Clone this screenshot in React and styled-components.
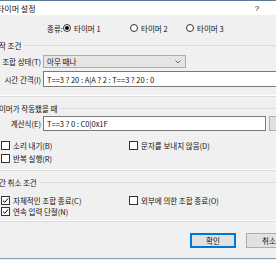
import React from 'react';
import styled, { createGlobalStyle } from 'styled-components';

const GlobalStyle = createGlobalStyle`
  html, body {
    margin: 0;
    padding: 0;
  }
  body {
    width: 276px;
    height: 260px;
    overflow: hidden;
    background: #f0f0f0;
    font-family: "Noto Sans CJK KR", "Noto Sans", sans-serif;
    font-size: 7.5px;
    color: #111;
  }
`;

const Window = styled.div`
  width: 340px;
  height: 258px;
  margin-left: -16px;
  display: flex;
  flex-direction: column;
  border-bottom: 1px solid #7f9db8;
`;

const TitleBar = styled.div`
  height: 14px;
  border-top: 1px solid #5b7c99;
  background: #fff;
  display: flex;
  align-items: center;
  padding: 0 60px 0 13px;
  font-size: 8px;
`;

const Title = styled.span`
  flex: 1;
`;

const HelpButton = styled.span`
  width: 14px;
  text-align: center;
  font-family: "Liberation Sans", sans-serif;
  font-size: 8px;
`;

const Row = styled.div`
  display: flex;
  align-items: center;
  height: ${(p) => p.height || 14}px;
  margin-top: ${(p) => p.top || 0}px;
  padding-left: ${(p) => p.indent || 0}px;
`;

const KindLabel = styled.span`
  width: 16px;
`;

const Choice = styled.label`
  display: flex;
  align-items: center;
  gap: 3px;
  width: ${(p) => p.width || 'auto'};
`;

const RadioDot = styled.span`
  width: 6px;
  height: 6px;
  border: 1px solid #333;
  border-radius: 50%;
  background: #fff;
  display: flex;
  align-items: center;
  justify-content: center;
  &::after {
    content: '';
    width: 4px;
    height: 4px;
    border-radius: 50%;
    background: ${(p) => (p.on ? '#000' : 'transparent')};
  }
`;

const Group = styled.section`
  margin: ${(p) => p.top}px 20px 0 2px;
  border: 1px solid #dcdcdc;
  border-top: none;
  box-shadow: inset -1px -1px 0 #fff;
  padding-bottom: ${(p) => p.bottom}px;
`;

const GroupHeader = styled.div`
  display: flex;
  align-items: center;
  height: 12px;
  margin-left: 5px;
  &::after {
    content: '';
    flex: 1;
    margin-left: 3px;
    border-top: 1px solid #dcdcdc;
  }
`;

const FieldLabel = styled.span`
  width: 56px;
  box-sizing: border-box;
  padding-right: 2px;
  text-align: right;
`;

const Combo = styled.div`
  width: 143px;
  height: 100%;
  box-sizing: border-box;
  border: 1px solid #adadad;
  background: #e5e5e5;
  display: flex;
  align-items: center;
  justify-content: space-between;
  padding: 0 4px 0 3px;
`;

const TextBox = styled.div`
  ${(p) => (p.width ? `width: ${p.width}px;` : 'flex: 1;')}
  height: 100%;
  box-sizing: border-box;
  border: 1px solid #7a7a7a;
  background: #fff;
  display: flex;
  align-items: center;
  padding-left: 3px;
  margin-right: ${(p) => (p.width ? 0 : 4)}px;
`;

const SmallButton = styled.div`
  width: 22px;
  height: 100%;
  margin-left: 3px;
  box-sizing: border-box;
  border: 1px solid #adadad;
  background: #e1e1e1;
  display: flex;
  align-items: center;
  justify-content: center;
`;

const CheckBody = styled.div`
  padding-left: 14px;
`;

const CheckBox = styled.span`
  width: 7px;
  height: 7px;
  border: 1px solid #333;
  background: #fff;
  display: flex;
  align-items: center;
  justify-content: center;
`;

const ButtonRow = styled.div`
  display: flex;
  gap: 10px;
  margin-top: 11px;
  padding-left: 206px;
`;

const DialogButton = styled.div`
  width: 46px;
  height: 15px;
  box-sizing: border-box;
  border: 1px solid ${(p) => (p.primary ? '#0078d7' : '#adadad')};
  box-shadow: ${(p) => (p.primary ? 'inset 0 0 0 1px #0078d7' : 'none')};
  background: #e1e1e1;
  display: flex;
  align-items: center;
  justify-content: center;
`;

const Check = ({ on, width, children }) => (
  <Choice width={width}>
    <CheckBox>
      {on && (
        <svg width="7" height="7" viewBox="0 0 7 7">
          <path d="M1 3.6 L2.8 5.3 L6 1.5" fill="none" stroke="#000" strokeWidth="1" />
        </svg>
      )}
    </CheckBox>
    {children}
  </Choice>
);

const Radio = ({ on, width, children }) => (
  <Choice width={width}>
    <RadioDot on={on} />
    {children}
  </Choice>
);

const App = () => (
  <>
    <GlobalStyle />
    <Window>
      <TitleBar>
        <Title>타이머 설정</Title>
        <HelpButton>?</HelpButton>
      </TitleBar>

      <Row top={6} indent={63}>
        <KindLabel>종류:</KindLabel>
        <Radio on width="67px">타이머 1</Radio>
        <Radio width="56px">타이머 2</Radio>
        <Radio>타이머 3</Radio>
      </Row>

      <Group top={4} bottom={9}>
        <GroupHeader>시작 조건</GroupHeader>
        <Row top={4} height={13}>
          <FieldLabel>조합 상태(T)</FieldLabel>
          <Combo>
            <span>아무 때나</span>
            <svg width="6" height="4" viewBox="0 0 6 4">
              <path d="M0.5 0.5 L3 3 L5.5 0.5" fill="none" stroke="#555" strokeWidth="0.9" />
            </svg>
          </Combo>
        </Row>
        <Row top={3} height={16}>
          <FieldLabel>시간 간격(I)</FieldLabel>
          <TextBox>T==3 ? 20 : A|A ? 2 : T==3 ? 20 : 0</TextBox>
        </Row>
      </Group>

      <Group top={5} bottom={5}>
        <GroupHeader>타이머가 작동했을 때</GroupHeader>
        <Row top={2} height={15}>
          <FieldLabel>계산식(E)</FieldLabel>
          <TextBox width={223}>T==3 ? 0 : C0|0x1F</TextBox>
          <SmallButton>...</SmallButton>
        </Row>
        <CheckBody>
          <Row top={8} height={13}>
            <Check width="128px">소리 내기(B)</Check>
            <Check>문자를 보내지 않음(D)</Check>
          </Row>
          <Row height={13}>
            <Check>반복 실행(R)</Check>
          </Row>
        </CheckBody>
      </Group>

      <Group top={5} bottom={4}>
        <GroupHeader>중간 취소 조건</GroupHeader>
        <CheckBody>
          <Row top={7} height={11}>
            <Check on width="128px">자체적인 조합 종료(C)</Check>
            <Check>외부에 의한 조합 종료(O)</Check>
          </Row>
          <Row height={11}>
            <Check on>연속 입력 단절(N)</Check>
          </Row>
        </CheckBody>
      </Group>

      <ButtonRow>
        <DialogButton primary>확인</DialogButton>
        <DialogButton>취소</DialogButton>
      </ButtonRow>
    </Window>
  </>
);

export default App;
